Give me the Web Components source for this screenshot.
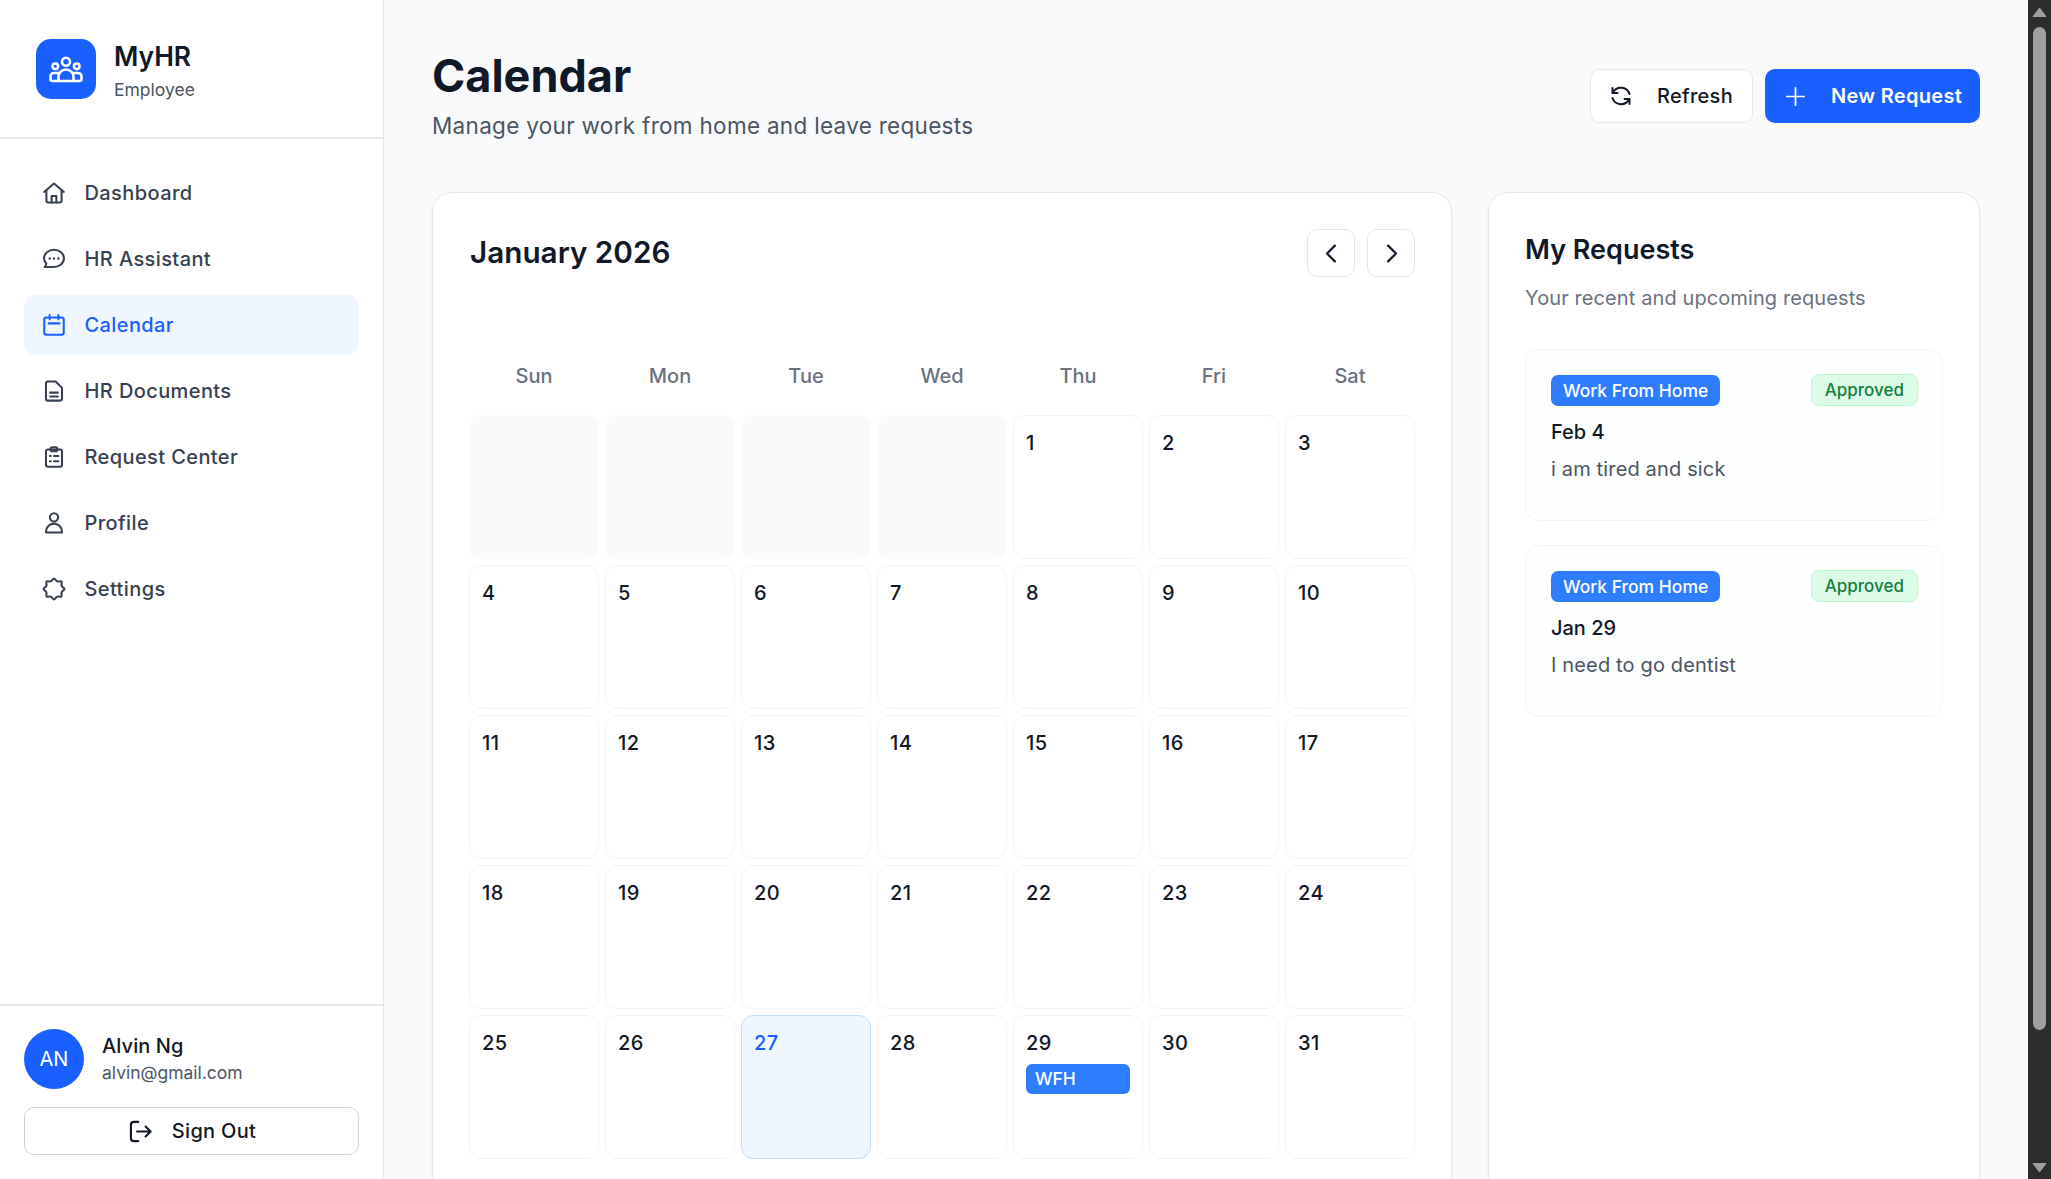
<!DOCTYPE html>
<html lang="en">
<head>
<meta charset="utf-8">
<title>MyHR Calendar</title>
<style>
  html, body { margin: 0; height: 1179px; overflow: hidden; }
  body {
    display: flex;
    font-family: Inter, "Liberation Sans", sans-serif;
    color: #111827;
    background: #f9fafb;
  }
</style>
</head>
<body>
<hr-sidebar></hr-sidebar>
<hr-main></hr-main>
<fake-scrollbar></fake-scrollbar>

<script>
// wavy outline for the settings icon
function scallop() {
  const pts = [];
  for (let i = 0; i < 16; i++) {
    const r = i % 2 ? 6.9 : 10.8;
    const a = (i * Math.PI) / 8 - Math.PI / 2;
    pts.push([12 + r * Math.cos(a), 12 + r * Math.sin(a)]);
  }
  const mid = (a, b) => [(a[0] + b[0]) / 2, (a[1] + b[1]) / 2];
  const start = mid(pts[15], pts[0]);
  let d = `M${start[0].toFixed(2)} ${start[1].toFixed(2)}`;
  pts.forEach((p, i) => {
    const m = mid(p, pts[(i + 1) % 16]);
    d += `Q${p[0].toFixed(2)} ${p[1].toFixed(2)} ${m[0].toFixed(2)} ${m[1].toFixed(2)}`;
  });
  return d + "z";
}

const ICONS = {
  home: `<path d="M2.900 11 12 3.200 21.100 11"/><path d="M5 9.200V19a1.800 1.800 0 0 0 1.800 1.800h10.400A1.800 1.800 0 0 0 19 19V9.200"/><path d="M9.800 20.800v-6h4.400v6"/>`,
  chat: `<path d="M12 3.500c5 0 9.200 3.400 9.200 7.900s-4.200 7.900-9.200 7.900H3.400c1-1 1.600-2 1.500-3.200a7.400 7.400 0 0 1-2.100-4.700C2.800 6.900 7 3.500 12 3.500z"/><path d="M8 11.500h.01M12 11.500h.01M16 11.500h.01" stroke-width="2.200"/>`,
  calendar: `<rect x="3" y="5" width="18" height="16" rx="2"/><path d="M8 2.800v4M16 2.800v4M7 10.500h10"/>`,
  doc: `<path d="M6.400 3.200h7.100l5.900 5.900v10a1.800 1.800 0 0 1-1.800 1.800H6.400a1.800 1.800 0 0 1-1.800-1.800V5a1.800 1.800 0 0 1 1.800-1.800z"/><path d="M8.500 13.500h7M8.500 17h7"/>`,
  clipboard: `<rect x="4.600" y="5" width="14.800" height="16" rx="1.800"/><rect x="9" y="3" width="6" height="3.600" rx="1.400"/><path d="M8.200 11h.8M12 11h4M8.200 16h.8M12 16h4"/>`,
  user: `<circle cx="12" cy="6.800" r="3.800"/><path d="M4.600 20.800V20a7.400 7.400 0 0 1 14.800 0v.8z"/>`,
  gear: `<path d="${scallop()}"/>`,
  signout: `<path d="M10 3.500H6a2.500 2.500 0 0 0-2.500 2.500v12A2.500 2.500 0 0 0 6 20.500h4"/><path d="M9 12h12M16.500 7.500 21 12l-4.500 4.500"/>`,
  refresh: `<path d="M3.500 4v5h5"/><path d="M3.800 9A9 9 0 0 1 20.500 10"/><path d="M20.500 20v-5h-5"/><path d="M20.200 15A9 9 0 0 1 3.500 14"/>`,
  plus: `<path d="M12 3v18M3 12h18"/>`,
  left: `<path d="M15 5l-7 7 7 7"/>`,
  right: `<path d="M9 5l7 7-7 7"/>`
};

function svg(name, size, stroke) {
  return `<svg width="${size}" height="${size}" viewBox="0 0 24 24" fill="none" stroke="currentColor" stroke-width="${stroke}" stroke-linecap="round" stroke-linejoin="round">${ICONS[name]}</svg>`;
}

class NavItem extends HTMLElement {
  constructor() {
    super();
    this.attachShadow({ mode: "open" });
  }
  connectedCallback() {
    this.shadowRoot.innerHTML = `
      <style>
        :host {
          display: flex;
          align-items: center;
          gap: 17.500px;
          height: 60px;
          padding-left: 17px;
          border-radius: 12px;
          color: #374151;
          font-size: 20px;
          font-weight: 500;
          letter-spacing: .4px;
        }
        :host([active]) { background: #eff6ff; color: #1a5fff; }
        svg { flex: none; }
      </style>
      ${svg(this.getAttribute("icon"), 26, 1.9)}<slot></slot>`;
  }
}

class HrSidebar extends HTMLElement {
  constructor() {
    super();
    this.attachShadow({ mode: "open" });
    this.shadowRoot.innerHTML = `
      <style>
        :host {
          flex: none;
          width: 384px;
          box-sizing: border-box;
          height: 1179px;
          display: flex;
          flex-direction: column;
          background: #fff;
          border-right: 1px solid #e5e7eb;
        }
        .brand {
          height: 139px;
          box-sizing: border-box;
          border-bottom: 2px solid #e5e7eb;
          display: flex;
          align-items: center;
          gap: 18px;
          padding-left: 36px;
        }
        .logo {
          width: 60px;
          height: 60px;
          border-radius: 15px;
          background: #1a5fff;
          color: #fff;
        }
        .logo svg { display: block; }
        .who { padding-top: 3px; }
        .name { font-size: 26.400px; font-weight: 600; line-height: 34px; color: #111827; }
        .role { font-size: 17.500px; line-height: 24px; margin-top: 5px; color: #4b5563; }
        nav {
          flex: 1;
          padding: 24px 24px 0;
          display: flex;
          flex-direction: column;
          gap: 6px;
        }
        .foot {
          height: 175px;
          box-sizing: border-box;
          border-top: 2px solid #e5e7eb;
          padding: 23px 24px 0;
          display: flex;
          flex-direction: column;
          gap: 18px;
        }
        .user { display: flex; align-items: center; gap: 18px; }
        .avatar {
          width: 60px;
          height: 60px;
          border-radius: 50%;
          background: #1a5fff;
          color: #fff;
          font-size: 20px;
          display: flex;
          align-items: center;
          justify-content: center;
        }
        .uname { font-size: 20px; font-weight: 500; line-height: 27px; letter-spacing: .1px; color: #111827; }
        .mail { font-size: 17.500px; line-height: 25px; color: #4b5563; }
        .signout {
          height: 48px;
          box-sizing: border-box;
          border: 1px solid #cbd5e1;
          border-radius: 10px;
          display: flex;
          align-items: center;
          justify-content: center;
          gap: 18px;
          font-size: 20px;
          font-weight: 500;
          letter-spacing: .3px;
          color: #111827;
        }
      </style>
      <div class="brand">
        <div class="logo">
          <svg width="60" height="60" viewBox="0 0 60 60" fill="none" stroke="currentColor" stroke-width="2.600" stroke-linecap="round" stroke-linejoin="round">
            <circle cx="30" cy="22.700" r="4"/>
            <circle cx="19.300" cy="27.300" r="2.800"/>
            <circle cx="40.700" cy="27.300" r="2.800"/>
            <path d="M22.500 34H18a3.500 3.500 0 0 0-3.500 3.500V40a2 2 0 0 0 2 2h27a2 2 0 0 0 2-2v-2.500A3.500 3.500 0 0 0 42 34h-4.500"/>
            <path d="M22.500 42v-4a7.500 7.500 0 0 1 15 0v4"/>
          </svg>
        </div>
        <div class="who">
          <div class="name">MyHR</div>
          <div class="role">Employee</div>
        </div>
      </div>
      <nav>
        <nav-item icon="home">Dashboard</nav-item>
        <nav-item icon="chat">HR Assistant</nav-item>
        <nav-item icon="calendar" active>Calendar</nav-item>
        <nav-item icon="doc">HR Documents</nav-item>
        <nav-item icon="clipboard">Request Center</nav-item>
        <nav-item icon="user">Profile</nav-item>
        <nav-item icon="gear">Settings</nav-item>
      </nav>
      <div class="foot">
        <div class="user">
          <div class="avatar">AN</div>
          <div>
            <div class="uname">Alvin Ng</div>
            <div class="mail">alvin@gmail.com</div>
          </div>
        </div>
        <div class="signout">${svg("signout", 27, 1.9)}<span>Sign Out</span></div>
      </div>`;
  }
}

class DayCell extends HTMLElement {
  constructor() {
    super();
    this.attachShadow({ mode: "open" });
    this.shadowRoot.innerHTML = `
      <style>
        :host {
          display: block;
          height: 144px;
          box-sizing: border-box;
          border: 1px solid #f3f4f6;
          border-radius: 12px;
          padding: 13px 12px 0;
          font-size: 20px;
          font-weight: 500;
          letter-spacing: .4px;
          line-height: 28px;
          color: #111827;
        }
        :host([empty]) { background: #f9fafb; border-color: #f9fafb; }
        :host([today]) { background: #eff6ff; border-color: #bfdbfe; color: #1a5fff; }
        .ev {
          display: block;
          height: 30px;
          margin-top: 7px;
          box-sizing: border-box;
          padding-left: 9px;
          border-radius: 6px;
          background: #2f7dff;
          color: #fff;
          font-size: 17.500px;
          font-weight: 500;
          letter-spacing: 0;
          line-height: 30px;
        }
        .ev:empty { display: none; }
      </style>
      <slot></slot><span class="ev"></span>`;
  }
  connectedCallback() {
    this.shadowRoot.querySelector(".ev").textContent = this.getAttribute("event") || "";
  }
}

class RequestCard extends HTMLElement {
  constructor() {
    super();
    this.attachShadow({ mode: "open" });
  }
  connectedCallback() {
    this.shadowRoot.innerHTML = `
      <style>
        :host {
          display: block;
          height: 172px;
          box-sizing: border-box;
          border: 1px solid #f3f4f6;
          border-radius: 14px;
          background: #fdfefe;
          padding: 24px 24px 0 25px;
        }
        .top { display: flex; justify-content: space-between; align-items: center; }
        .type {
          height: 31px;
          box-sizing: border-box;
          padding: 0 12px;
          border-radius: 7px;
          background: #2f7dff;
          color: #fff;
          font-size: 17.500px;
          font-weight: 500;
          line-height: 31px;
        }
        .status {
          height: 32px;
          box-sizing: border-box;
          padding: 0 13px;
          border-radius: 8px;
          background: #dcfce7;
          border: 1px solid #bbf7d0;
          color: #15803d;
          font-size: 17px;
          font-weight: 500;
          line-height: 30px;
        }
        .date { margin-top: 11px; font-size: 20px; font-weight: 500; line-height: 30px; color: #111827; }
        .why { margin-top: 7px; font-size: 20px; line-height: 30px; letter-spacing: .15px; color: #4b5563; }
      </style>
      <div class="top"><span class="type">${this.getAttribute("type")}</span><span class="status">${this.getAttribute("status")}</span></div>
      <div class="date">${this.getAttribute("date")}</div>
      <div class="why"><slot></slot></div>`;
  }
}

class HrMain extends HTMLElement {
  constructor() {
    super();
    this.attachShadow({ mode: "open" });
    const names = ["Sun", "Mon", "Tue", "Wed", "Thu", "Fri", "Sat"];
    let cells = `<day-cell empty></day-cell>`.repeat(4);
    for (let d = 1; d <= 31; d++) {
      const extra = d === 27 ? " today" : d === 29 ? ' event="WFH"' : "";
      cells += `<day-cell${extra}>${d}</day-cell>`;
    }
    this.shadowRoot.innerHTML = `
      <style>
        :host {
          flex: 1;
          min-width: 0;
          box-sizing: border-box;
          height: 1179px;
          overflow: hidden;
          padding: 48px 48px 0;
          background: #f9fafb;
        }
        header {
          display: flex;
          justify-content: space-between;
          align-items: flex-start;
          height: 144px;
        }
        h1 { margin: 0; font-size: 45px; font-weight: 700; line-height: 56px; color: #111827; }
        .sub { font-size: 22.500px; line-height: 34px; letter-spacing: .3px; color: #4b5563; margin-top: 5px; }
        .actions { display: flex; gap: 12px; margin-top: 21px; }
        .btn {
          height: 54px;
          box-sizing: border-box;
          border-radius: 10px;
          display: flex;
          align-items: center;
          font-size: 20px;
          font-weight: 500;
          letter-spacing: .3px;
        }
        .ghost { width: 163px; padding-left: 17.500px; gap: 24.500px; background: #fff; border: 1px solid #e5e7eb; color: #111827; }
        .solid { width: 215px; padding-left: 19px; gap: 24px; background: #1a5fff; color: #fff; font-weight: 600; }
        .cols { display: flex; gap: 36px; align-items: flex-start; }
        .card {
          box-sizing: border-box;
          background: #fff;
          border: 1px solid #e5e7eb;
          border-radius: 20px;
          box-shadow: 0 1px 3px rgba(0,0,0,.06);
        }
        .cal { width: 1020px; height: 1100px; padding: 36px; }
        .req { width: 492px; height: 1100px; padding: 38px 36px; }
        .cal-top { display: flex; justify-content: space-between; height: 48px; align-items: center; }
        h2 { margin: 0 0 2px 1px; font-size: 29.700px; font-weight: 600; line-height: 40px; color: #111827; }
        .navs { display: flex; gap: 12px; }
        .nav {
          width: 48px;
          height: 48px;
          box-sizing: border-box;
          background: #fff;
          border: 1px solid #e5e7eb;
          border-radius: 10px;
          color: #111827;
          display: flex;
          align-items: center;
          justify-content: center;
        }
        .grid { display: grid; grid-template-columns: repeat(7, 130px); gap: 6px; }
        .dow {
          margin-top: 75px;
          height: 48px;
          margin-bottom: 15px;
        }
        .dow span { text-align: center; line-height: 48px; font-size: 20px; font-weight: 500; color: #6b7280; }
        h3 { margin: 0; font-size: 27px; font-weight: 600; line-height: 38px; color: #111827; }
        .req-sub { font-size: 20px; line-height: 30px; letter-spacing: .1px; color: #6b7280; margin-top: 14px; margin-bottom: 36px; }
        .list { display: flex; flex-direction: column; gap: 24px; }
      </style>
      <header>
        <div>
          <h1>Calendar</h1>
          <div class="sub">Manage your work from home and leave requests</div>
        </div>
        <div class="actions">
          <div class="btn ghost">${svg("refresh", 24, 2)}<span>Refresh</span></div>
          <div class="btn solid">${svg("plus", 23, 1.8)}<span>New Request</span></div>
        </div>
      </header>
      <div class="cols">
        <section class="card cal">
          <div class="cal-top">
            <h2>January 2026</h2>
            <div class="navs">
              <div class="nav">${svg("left", 27, 1.9)}</div>
              <div class="nav">${svg("right", 27, 1.9)}</div>
            </div>
          </div>
          <div class="grid dow">${names.map(n => `<span>${n}</span>`).join("")}</div>
          <div class="grid">${cells}</div>
        </section>
        <section class="card req">
          <h3>My Requests</h3>
          <div class="req-sub">Your recent and upcoming requests</div>
          <div class="list">
            <request-card type="Work From Home" status="Approved" date="Feb 4">i am tired and sick</request-card>
            <request-card type="Work From Home" status="Approved" date="Jan 29">I need to go dentist</request-card>
          </div>
        </section>
      </div>`;
  }
}

class FakeScrollbar extends HTMLElement {
  constructor() {
    super();
    this.attachShadow({ mode: "open" });
    this.shadowRoot.innerHTML = `
      <style>
        :host {
          flex: none;
          width: 23px;
          height: 1179px;
          box-sizing: border-box;
          background: #2c2c2c;
          display: flex;
          flex-direction: column;
          align-items: center;
        }
        .thumb { width: 13px; flex: none; height: 1003px; margin-top: 9px; background: #9f9f9f; border-radius: 7px; }
        .gap { flex: 1; }
        svg { display: block; flex: none; }
        .up { margin-top: 7px; }
        .down { margin-bottom: 6px; }
      </style>
      <svg class="up" width="15" height="11" viewBox="0 0 15 11"><path d="M1 9.500h13L7.500 1z" fill="#9f9f9f" stroke="#9f9f9f" stroke-linejoin="round"/></svg>
      <div class="thumb"></div>
      <div class="gap"></div>
      <svg class="down" width="15" height="11" viewBox="0 0 15 11"><path d="M1 1.500h13L7.500 10z" fill="#9f9f9f" stroke="#9f9f9f" stroke-linejoin="round"/></svg>`;
  }
}

customElements.define("nav-item", NavItem);
customElements.define("hr-sidebar", HrSidebar);
customElements.define("day-cell", DayCell);
customElements.define("request-card", RequestCard);
customElements.define("hr-main", HrMain);
customElements.define("fake-scrollbar", FakeScrollbar);
</script>
</body>
</html>
